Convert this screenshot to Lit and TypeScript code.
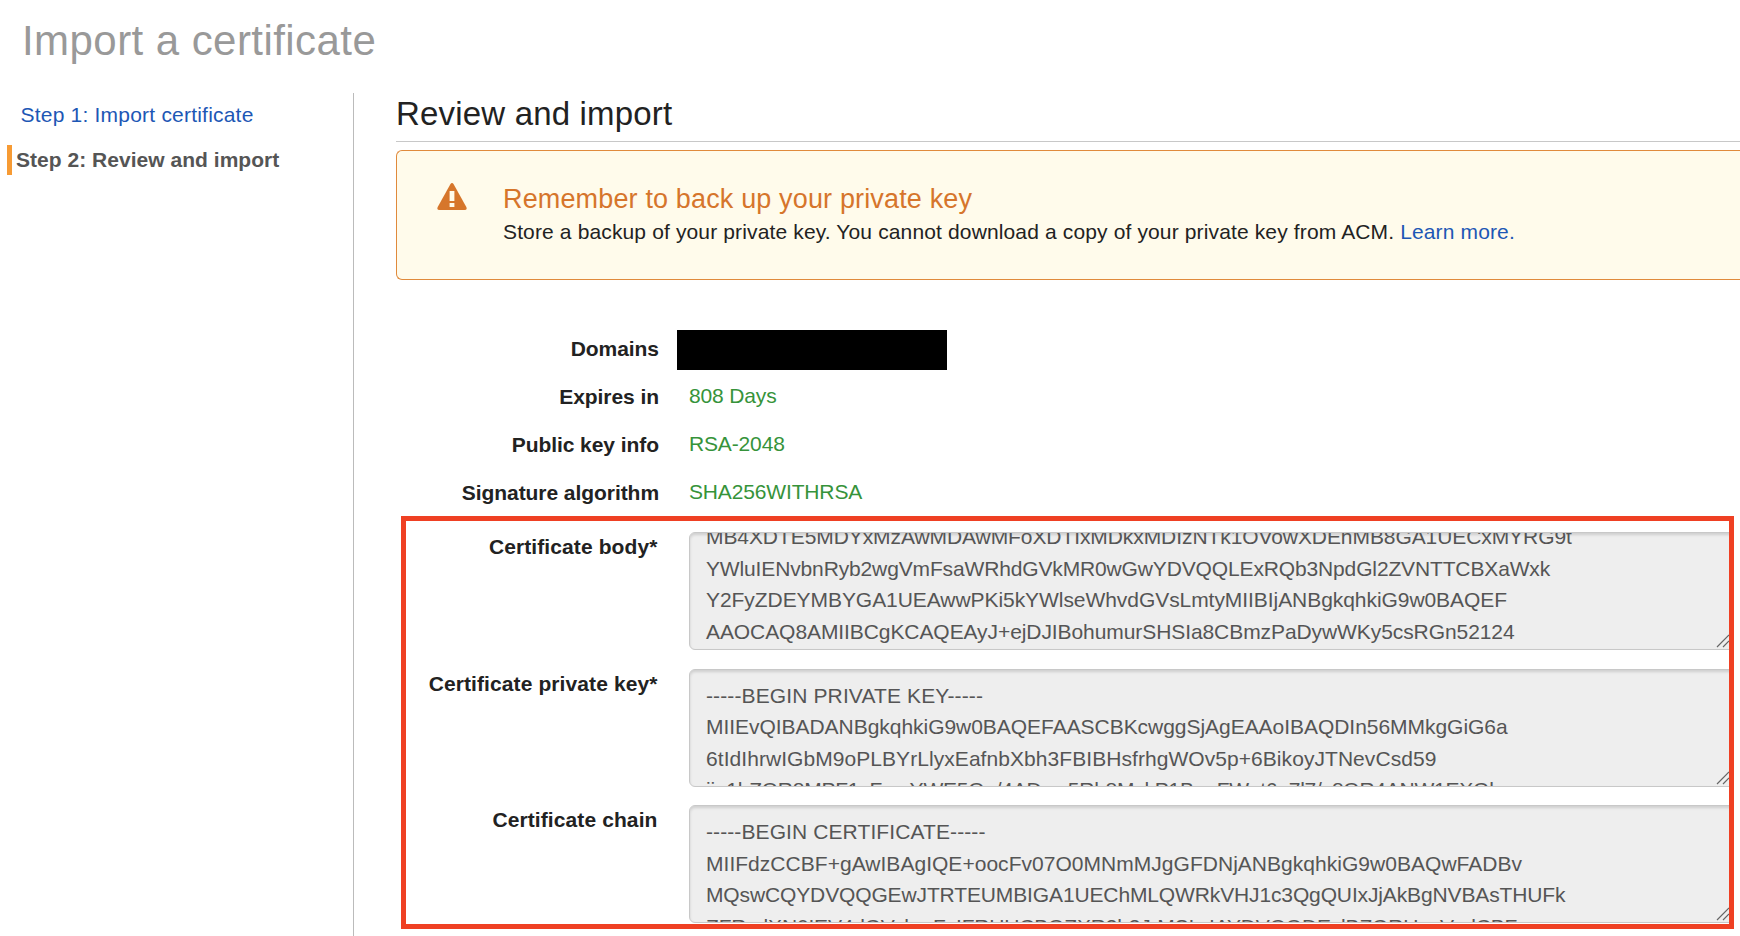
import { LitElement, html, css } from "lit";
import { customElement } from "lit/decorators.js";
import { styleMap } from "lit/directives/style-map.js";

// Each line carries its tracking in px.
type Line = [string, number];
const BODY: Line[] = [
  ["MB4XDTE5MDYxMzAwMDAwMFoXDTIxMDkxMDIzNTk1OVowXDEhMB8GA1UECxMYRG9t", -0.08],
  ["YWluIENvbnRyb2wgVmFsaWRhdGVkMR0wGwYDVQQLExRQb3NpdGl2ZVNTTCBXaWxk", -0.14],
  ["Y2FyZDEYMBYGA1UEAwwPKi5kYWlseWhvdGVsLmtyMIIBIjANBgkqhkiG9w0BAQEF", -0.06],
  ["AAOCAQ8AMIIBCgKCAQEAyJ+ejDJIBohumurSHSIa8CBmzPaDywWKy5csRGn52124", -0.08],
];
const KEY: Line[] = [
  ["-----BEGIN PRIVATE KEY-----", 0.12],
  ["MIIEvQIBADANBgkqhkiG9w0BAQEFAASCBKcwggSjAgEAAoIBAQDIn56MMkgGiG6a", -0.04],
  ["6tIdIhrwIGbM9oPLBYrLlyxEafnbXbh3FBIBHsfrhgWOv5p+6BikoyJTNevCsd59", 0.06],
  ["iip1hZQR8MPF1xFmcYWE5Qu/4ADwa5Rh8MxkP1BaoFWgt6a7l7/c8QR4ANW1EXGl", -0.24],
];
const CHAIN: Line[] = [
  ["-----BEGIN CERTIFICATE-----", 0.1],
  ["MIIFdzCCBF+gAwIBAgIQE+oocFv07O0MNmMJgGFDNjANBgkqhkiG9w0BAQwFADBv", 0.03],
  ["MQswCQYDVQQGEwJTRTEUMBIGA1UEChMLQWRkVHJ1c3QgQUIxJjAkBgNVBAsTHUFk", -0.13],
  ["ZFRydXN0IEV4dGVybmFsIFRUUCBOZXR3b3JrMSIwIAYDVQQDExlBZGRUcnVzdCBF", -0.18],
];

@customElement("app-root")
export class AppRoot extends LitElement {
  static styles = css`
    :host { display: block; width: 1740px; height: 936px; overflow: hidden; background: #fff;
      font-family: "Liberation Sans", Arial, sans-serif; font-size: 21px; color: #222; }
    * { box-sizing: border-box; }
    h1, h2, h3, p { margin: 0; font-weight: 400; white-space: nowrap; }
    h1 { height: 93px; padding: 17px 0 0 22px; font-size: 42px; line-height: 48px; color: #999; letter-spacing: 0.44px; }
    .page { display: flex; height: 843px; }
    nav { width: 354px; border-right: 1px solid #bbb; padding-top: 7px; flex: none; }
    .step { display: flex; align-items: center; height: 30px; margin-left: 7px; white-space: nowrap; }
    .step.link { color: #1d57b5; padding-left: 13.5px; letter-spacing: 0.21px; }
    .step.now { margin-top: 15px; border-left: 5px solid #f79b34; padding-left: 4px; font-weight: 700; color: #555; letter-spacing: 0.03px; }
    main { flex: none; width: 1386px; padding-left: 42px; }
    h2 { height: 49px; padding-top: 2px; border-bottom: 1px solid #c8c8c8; font-size: 33px; line-height: 38px; letter-spacing: 0.18px; }
    .alert { display: flex; margin-top: 8px; height: 130px; border: 1.5px solid #e08a3c; border-right: 0; border-radius: 6px 0 0 6px; background: #fffbeb; }
    .alert svg { margin: 32px 36px 0 40px; flex: none; }
    h3 { padding-top: 32px; font-size: 27px; line-height: 32px; color: #d6752b; letter-spacing: 0.15px; }
    .alert p { line-height: 34px; letter-spacing: 0.137px; }
    a { color: #1d57b5; }
    .info { padding-top: 50px; height: 235px; }
    .row { display: flex; height: 48px; white-space: nowrap; }
    .row b { width: 263px; text-align: right; line-height: 38px; flex: none; letter-spacing: -0.06px; }
    .row span { margin-left: 30px; line-height: 36px; color: #36933a; letter-spacing: -0.15px; }
    .row .mask { margin-left: 18px; width: 270px; height: 40px; background: #000; }
    .frame { width: 1333px; height: 413px; margin-left: 4.5px; margin-top: 1px; border: 5px solid #ef4023; padding-top: 11px; overflow: hidden; }
    .field { display: flex; margin-bottom: 18.5px; height: 118px; }
    .field b { flex: none; width: 252px; text-align: right; line-height: 30px; white-space: nowrap; letter-spacing: 0.1px; }
    .area { position: relative; flex: none; width: 1050px; margin-left: 31.5px; border: 1px solid #c8c8c8; border-radius: 6px; background: #eee; color: #555; overflow: hidden; padding: 10px 0 0 16px; line-height: 31.6px; white-space: nowrap; box-shadow: inset 0 2px 3px #0002; }
    .area.scrolled { padding-top: 0; }
    .scrolled .lines { margin-top: -12px; }
    .line { height: 31.6px; }
    .grip { position: absolute; left: 1026px; bottom: 1px; }
  `;
  info(label: string, value: string) {
    return html`<div class="row"><b>${label}</b>${value ? html`<span>${value}</span>` : html`<div class="mask"></div>`}</div>`;
  }
  field(label: string, lines: Line[], scrolled = false) {
    return html`<div class="field"><b>${label}</b><div class="area ${scrolled ? "scrolled" : ""}">
      <div class="lines">${lines.map(([text, tracking]) => html`<div class="line" style=${styleMap({ letterSpacing: `${tracking}px` })}>${text}</div>`)}</div>
      <svg class="grip" width="14" height="14" viewBox="0 0 14 14" stroke="#666" stroke-width="1.2" fill="none"><path d="M1 13 13 1M7 13 13 7"/></svg>
    </div></div>`;
  }
  render() {
    return html`<h1>Import a certificate</h1>
      <div class="page">
        <nav><div class="step link">Step 1: Import certificate</div><div class="step now">Step 2: Review and import</div></nav>
        <main>
          <h2>Review and import</h2>
          <div class="alert">
            <svg width="30" height="28" viewBox="0 0 30 28"><path fill="#d6762b" d="M13.2 1.4q1.8-2.6 3.6 0L29.3 24q1.2 3-1.8 3H2.5q-3 0-1.8-3z"/><path fill="#fffbeb" d="M12.6 8h4.8v10h-4.8zM12.6 20h4.8v4h-4.8z"/></svg>
            <div><h3>Remember to back up your private key</h3>
            <p>Store a backup of your private key. You cannot download a copy of your private key from ACM. <a>Learn more.</a></p></div>
          </div>
          <div class="info">${this.info("Domains", "")}${this.info("Expires in", "808 Days")}${this.info("Public key info", "RSA-2048")}${this.info("Signature algorithm", "SHA256WITHRSA")}</div>
          <div class="frame">${this.field("Certificate body*", BODY, true)}${this.field("Certificate private key*", KEY)}${this.field("Certificate chain", CHAIN)}</div>
        </main>
      </div>`;
  }
}
